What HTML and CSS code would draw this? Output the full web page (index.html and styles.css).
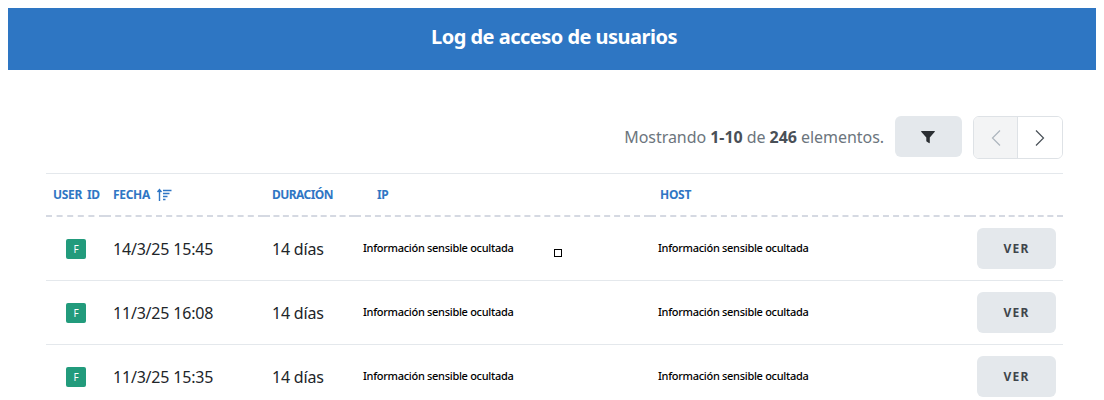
FILE: index.html
```html
<!DOCTYPE html>
<html lang="es">
<head>
  <meta charset="UTF-8">
  <meta name="viewport" content="width=device-width, initial-scale=1.0">
  <title>Log de acceso de usuarios</title>
  <link rel="stylesheet" href="styles.css">
</head>
<body>
  <header class="banner">
    <h1>Log de acceso de usuarios</h1>
  </header>

  <main class="content">
    <div class="toolbar">
      <span class="count">Mostrando <b>1-10</b> de <b>246</b> elementos.</span>
      <button class="filter-btn" aria-label="Filtrar">
        <svg width="14" height="14" viewBox="0 0 14 14"><path d="M0.6 1h12.8a.5.5 0 0 1 .4.8L8.800 7.400v5.100a.6.6 0 0 1-.9.5L5.600 11.400a.6.6 0 0 1-.3-.5V7.400L.2 1.800A.5.5 0 0 1 .6 1z" fill="#2b2f33"/></svg>
      </button>
      <div class="pager">
        <button class="page-btn disabled" aria-label="Anterior">
          <svg width="12" height="18" viewBox="0 0 12 18"><path d="M10 1.500 2.500 9l7.500 7.500" fill="none" stroke="#adb5bd" stroke-width="1.200"/></svg>
        </button>
        <button class="page-btn" aria-label="Siguiente">
          <svg width="12" height="18" viewBox="0 0 12 18"><path d="M2 1.500 9.500 9 2 16.500" fill="none" stroke="#495057" stroke-width="1.200"/></svg>
        </button>
      </div>
    </div>

    <table class="log-table">
      <colgroup>
        <col class="col-user"><col class="col-date"><col class="col-time"><col class="col-ip"><col class="col-host"><col class="col-action">
      </colgroup>
      <thead>
        <tr>
          <th>USER ID</th>
          <th class="pad">FECHA
            <svg class="sort" width="16" height="14" viewBox="0 0 16 14"><path d="M3.500 13V2M1.500 4 3.500 1.500 5.500 4M7 2.500h8.500M7 5.500h6.500M7 8.500h4.500M7 11.500h2.500" fill="none" stroke="#2f76c4" stroke-width="1.400"/></svg>
          </th>
          <th class="pad th-time">DURACIÓN</th>
          <th class="th-ip">IP</th>
          <th class="th-host">HOST</th>
          <th></th>
        </tr>
      </thead>
      <tbody>
        <tr>
          <td><span class="badge">F</span></td>
          <td class="date">14/3/25 15:45</td>
          <td class="date">14 días</td>
          <td class="hidden-info">Información sensible ocultada</td>
          <td class="hidden-info">Información sensible ocultada</td>
          <td class="action"><button class="view-btn">VER</button></td>
        </tr>
        <tr>
          <td><span class="badge">F</span></td>
          <td class="date">11/3/25 16:08</td>
          <td class="date">14 días</td>
          <td class="hidden-info">Información sensible ocultada</td>
          <td class="hidden-info">Información sensible ocultada</td>
          <td class="action"><button class="view-btn">VER</button></td>
        </tr>
        <tr>
          <td><span class="badge">F</span></td>
          <td class="date">11/3/25 15:35</td>
          <td class="date">14 días</td>
          <td class="hidden-info">Información sensible ocultada</td>
          <td class="hidden-info">Información sensible ocultada</td>
          <td class="action"><button class="view-btn">VER</button></td>
        </tr>
      </tbody>
    </table>
    <span class="marker"></span>
  </main>
</body>
</html>
```

FILE: styles.css
```css
* { box-sizing: border-box; }
html, body { height: 400px; overflow: hidden; }
body { margin: 8px; background: #fff; font-family: "Noto Sans", sans-serif; color: #212529; }

.banner { height: 62px; padding: 0 0 6px 4px; background: #2e76c3; display: flex; align-items: center; justify-content: center; }
.banner h1 { margin: 0; color: #fff; font-size: 20px; font-weight: 700; letter-spacing: -0.52px; }

.content { position: relative; padding: 46px 33px 0 38px; }

.toolbar { display: flex; justify-content: flex-end; align-items: flex-start; height: 57px; }
.count { font-size: 16px; line-height: 43px; letter-spacing: -0.05px; color: #6c757d; margin-right: 11px; }
.count b { color: #495057; }
.filter-btn { width: 67px; height: 41px; border: none; border-radius: 6px; background: #e4e8ec; display: flex; align-items: center; justify-content: center; margin-right: 11px; padding: 0 1px 0 0; }
.pager { display: flex; width: 90px; height: 43px; border: 1px solid #dee2e6; border-radius: 6px; overflow: hidden; }
.page-btn { flex: 1; border: none; background: #fff; padding: 0; display: flex; align-items: center; justify-content: center; }
.page-btn.disabled { flex: 0 0 44px; background: #f3f4f5; border-right: 1px solid #dee2e6; }

.log-table { width: 1017px; table-layout: fixed; border-collapse: collapse; }
.col-user { width: 59px; }
.col-date { width: 159px; }
.col-time { width: 91px; }
.col-ip { width: 295px; }
.col-host { width: 320px; }
.col-action { width: 93px; }

.log-table th { height: 42px; padding: 0 0 0 7px; text-align: left; font-size: 12px; font-weight: 700; letter-spacing: -0.3px; word-spacing: 2px; color: #2f76c4; border-top: 1px solid #e4e8ec; border-bottom: 2px dashed #d5d9e2; white-space: nowrap; }
.log-table th.pad { padding-left: 8px; }
.log-table th.th-time { letter-spacing: -0.55px; }
.log-table th.th-ip { padding-left: 22px; }
.log-table th.th-host { padding-left: 10px; }
.sort { vertical-align: -3px; margin-left: 1px; }

.log-table td { height: 64px; padding: 0 0 0 8px; border-bottom: 1px solid #e4e8ec; }
.log-table tbody tr:first-child td { height: 65px; padding-top: 1px; }
.date { font-size: 16px; letter-spacing: -0.2px; color: #212529; white-space: nowrap; }
.hidden-info { font-size: 11px; font-weight: 500; letter-spacing: -0.3px; color: #000; white-space: nowrap; }
.log-table td.hidden-info { padding-bottom: 3px; }

.badge { display: block; width: 20px; height: 20px; margin-left: 12px; border-radius: 2px; background: #229b7c; color: #fff; font-size: 10px; line-height: 20px; text-align: center; }

.log-table td.action { padding-left: 7px; }
.view-btn { width: 79px; height: 41px; border: none; border-radius: 6px; background: #e4e8ec; color: #3f454b; font-family: inherit; font-size: 12px; font-weight: 700; letter-spacing: 1.2px; padding: 0; }

.marker { position: absolute; left: 546px; top: 179px; width: 8px; height: 8px; border: 1px solid #000; background: #fff; }
```
